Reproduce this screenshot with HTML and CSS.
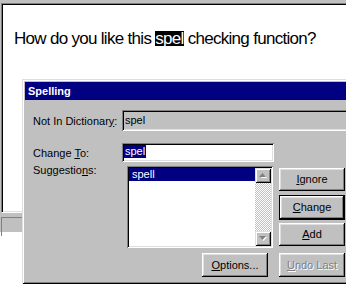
FILE: index.html
```html
<!DOCTYPE html>
<html lang="en">
<head>
    <meta charset="UTF-8">
    <title>Spelling</title>
    <link rel="stylesheet" href="styles.css">
</head>
<body>
    <div class="app">
        <div class="doc">
            <p class="doc-text">How do you like this <span class="hilite">spel</span> checking function?</p>
        </div>
        <div class="status">
            <div class="status-pane"></div>
        </div>
    </div>

    <div class="dialog">
        <div class="titlebar">Spelling</div>
        <div class="dialog-body">
            <div class="row row-dict">
                <span class="label">Not In Dictionar<u>y</u>:</span>
                <div class="field field-static">spel</div>
            </div>
            <div class="row row-change">
                <span class="label">Change <u>T</u>o:</span>
                <div class="field field-input"><span class="sel">spel</span></div>
            </div>
            <div class="row row-sugg">
                <span class="label label-sugg">Suggestio<u>n</u>s:</span>
                <div class="listbox">
                    <div class="list-items">
                        <div class="list-item selected">spell</div>
                    </div>
                    <div class="scrollbar">
                        <div class="sb-btn">
                            <svg width="8" height="5" viewBox="0 0 8 5"><path d="M4 1 L7 4 L1 4 Z" fill="#fff" transform="translate(1 1)"/><path d="M3.5 0 L7 4 L0 4 Z" fill="#808080"/></svg>
                        </div>
                        <div class="sb-track"></div>
                        <div class="sb-btn">
                            <svg width="8" height="5" viewBox="0 0 8 5"><path d="M0 0 L7 0 L3.5 4 Z" fill="#fff" transform="translate(1 1)"/><path d="M0 0 L7 0 L3.5 4 Z" fill="#808080"/></svg>
                        </div>
                    </div>
                </div>
                <div class="btn-col">
                    <button class="btn"><u>I</u>gnore</button>
                    <button class="btn btn-default"><u>C</u>hange</button>
                    <button class="btn"><u>A</u>dd</button>
                </div>
            </div>
            <div class="row row-bottom">
                <button class="btn btn-wide"><u>O</u>ptions...</button>
                <button class="btn btn-wide" disabled><u>U</u>ndo Last</button>
            </div>
        </div>
    </div>
</body>
</html>
```

FILE: styles.css
```css
body {
    margin: 0;
    width: 346px;
    height: 285px;
    overflow: hidden;
    position: relative;
    background-color: #fff;
    font-family: 'Liberation Sans', Arial, sans-serif;
    font-size: 11px;
    color: #000;
}

u {
    text-decoration: underline;
    text-underline-offset: 1px;
}

/* document window behind the dialog */
.app {
    height: 232px;
    box-sizing: border-box;
    padding: 3px 0 0 1px;
    background-color: #c0c0c0;
}

.doc {
    height: 210px;
    box-sizing: border-box;
    border-top: 1px solid #808080;
    border-left: 1px solid #808080;
    border-bottom: 1px solid #fff;
    background-color: #fff;
    box-shadow: inset 1px 1px #000, inset 0 -1px #dfdfdf;
}

.doc-text {
    margin: 0;
    padding: 26px 0 0 12px;
    font-size: 17px;
    line-height: 17px;
    letter-spacing: -0.7px;
    white-space: nowrap;
}

.hilite {
    display: inline-block;
    line-height: 15px;
    background-color: #000;
    color: #fff;
}

.status {
    height: 22px;
    box-sizing: border-box;
    padding-top: 4px;
}

.status-pane {
    height: 100%;
    border-top: 1px solid #808080;
    border-left: 1px solid #808080;
}

/* dialog */
.dialog {
    position: absolute;
    left: 22px;
    top: 79px;
    width: 332px;
    height: 205px;
    box-sizing: border-box;
    padding: 3px;
    background-color: #c0c0c0;
    box-shadow: inset 1px 1px #dfdfdf, inset -1px -1px #000, inset 2px 2px #fff, inset -2px -2px #808080;
}

.titlebar {
    height: 18px;
    line-height: 18px;
    padding-left: 3px;
    background-color: #000080;
    color: #fff;
    font-weight: bold;
}

.dialog-body {
    padding: 10px 0 0 8px;
}

.row {
    display: flex;
}

.label {
    flex: none;
    white-space: nowrap;
}

.row-dict {
    height: 21px;
    align-items: center;
}

.row-dict .label,
.row-change .label {
    width: 89px;
}

.field {
    box-sizing: border-box;
    padding: 2px;
    box-shadow: inset 1px 1px #808080, inset -1px -1px #fff, inset 2px 2px #000, inset -2px -2px #dfdfdf;
}

.field-static {
    width: 240px;
    height: 21px;
    padding-left: 3px;
    line-height: 17px;
}

.row-change {
    margin-top: 12px;
    height: 19px;
    align-items: center;
}

.field-input {
    width: 152px;
    height: 19px;
    background-color: #fff;
}

.sel {
    display: inline-block;
    height: 13px;
    line-height: 13px;
    padding: 0 1px;
    background-color: #000080;
    color: #fff;
    vertical-align: top;
}

.row-sugg {
    margin-top: 2px;
    align-items: flex-start;
}

.label-sugg {
    width: 94px;
    line-height: 13px;
}

.listbox {
    display: flex;
    width: 146px;
    height: 82px;
    margin-top: 2px;
    box-sizing: border-box;
    padding: 2px;
    background-color: #fff;
    box-shadow: inset 1px 1px #808080, inset -1px -1px #fff, inset 2px 2px #000, inset -2px -2px #dfdfdf;
}

.list-items {
    flex: 1;
}

.list-item {
    height: 13px;
    line-height: 13px;
    padding-left: 3px;
}

.list-item.selected {
    background-color: #000080;
    color: #fff;
}

.scrollbar {
    display: flex;
    flex-direction: column;
    width: 16px;
}

.sb-btn {
    display: flex;
    align-items: center;
    justify-content: center;
    height: 15px;
    background-color: #c0c0c0;
    box-shadow: inset 1px 1px #dfdfdf, inset -1px -1px #000, inset 2px 2px #fff, inset -2px -2px #808080;
}

.sb-track {
    flex: 1;
    background-image: repeating-conic-gradient(#c0c0c0 0 25%, #fff 0 50%);
    background-size: 2px 2px;
}

.btn-col {
    display: flex;
    flex-direction: column;
    margin: 4px 0 0 6px;
}

.btn {
    width: 66px;
    height: 23px;
    box-sizing: border-box;
    padding: 0;
    border: none;
    background-color: #c0c0c0;
    font-family: inherit;
    font-size: 11px;
    color: #000;
    line-height: 23px;
    box-shadow: inset -1px -1px #000, inset 1px 1px #fff, inset -2px -2px #808080, inset 2px 2px #dfdfdf;
}

.btn-default {
    height: 25px;
    margin: 4px 0 3px;
    border: 1px solid #000;
    line-height: 23px;
}

.btn:disabled {
    color: #808080;
    text-shadow: 1px 1px #fff;
}

.row-bottom {
    margin: 5px 0 0 169px;
    gap: 11px;
}

.btn-wide {
    height: 24px;
    line-height: 24px;
}
```
